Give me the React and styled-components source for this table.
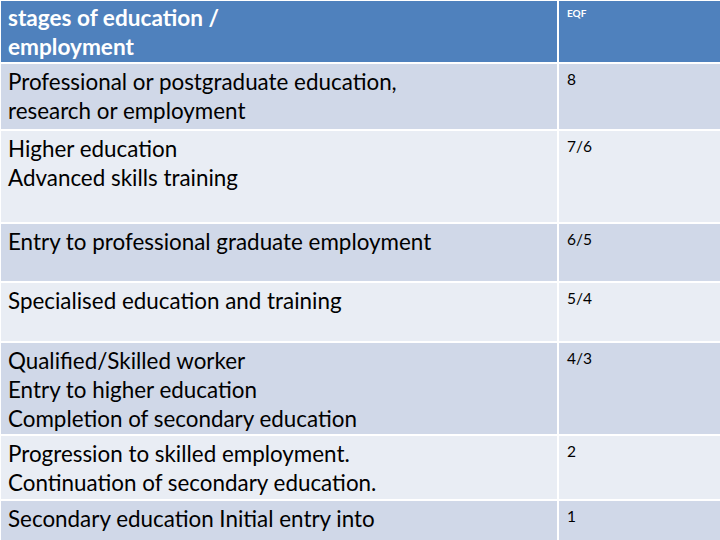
import React from 'react';
import styled, { createGlobalStyle } from 'styled-components';

const GlobalStyle = createGlobalStyle`
    html, body {
        margin: 0;
        padding: 0;
        background: #ffffff;
    }
    body {
        font-family: Lato, "Liberation Sans", sans-serif;
    }
`;

const Page = styled.div`
    width: 720px;
    height: 540px;
    overflow: hidden;
    padding: 1px 0 0 1px;
    box-sizing: border-box;
    background: #ffffff;
`;

const Table = styled.div`
    display: grid;
    grid-template-columns: 556px 1fr;
    column-gap: 2px;
    row-gap: 2px;
`;

const tones = {
    head: '#4f81bd',
    dark: '#d0d8e8',
    light: '#e9edf4',
};

const StageCell = styled.div`
    background: ${p => tones[p.$tone]};
    height: ${p => p.$h}px;
    padding: 3px 0 0 7px;
    box-sizing: border-box;
    font-size: 22.4px;
    line-height: 29px;
    color: #000;
    white-space: nowrap;
`;

const LevelCell = styled.div`
    background: ${p => tones[p.$tone]};
    height: ${p => p.$h}px;
    padding: 4px 0 0 8px;
    box-sizing: border-box;
    font-size: 15.5px;
    line-height: 22px;
    color: #000;
`;

const HeadStage = styled(StageCell)`
    color: #ffffff;
    font-weight: 700;
    font-size: 22.6px;
    padding-top: 2px;
`;

const HeadLevel = styled(LevelCell)`
    color: #ffffff;
    font-weight: 700;
    font-size: 10px;
    line-height: 14px;
    padding-top: 5px;
`;

const rows = [
    { h: 65, tone: 'dark', stage: ['Professional or postgraduate education,', 'research or employment'], eqf: '8' },
    { h: 91, tone: 'light', stage: ['Higher education', 'Advanced skills training'], eqf: '7/6' },
    { h: 57, tone: 'dark', stage: ['Entry to professional graduate employment'], eqf: '6/5' },
    { h: 58, tone: 'light', stage: ['Specialised education and training'], eqf: '5/4' },
    { h: 91, tone: 'dark', stage: ['Qualified/Skilled worker', 'Entry to higher education', 'Completion of secondary education'], eqf: '4/3' },
    { h: 63, tone: 'light', stage: ['Progression to skilled employment.', 'Continuation of secondary education.'], eqf: '2' },
    { h: 60, tone: 'dark', stage: ['Secondary education Initial entry into'], eqf: '1' },
];

export default function App() {
    return (
        <Page>
            <GlobalStyle />
            <Table>
                <HeadStage $tone="head" $h={61}>
                    stages of education /<br />employment
                </HeadStage>
                <HeadLevel $tone="head" $h={61}>EQF</HeadLevel>
                {rows.map((r, i) => (
                    <React.Fragment key={i}>
                        <StageCell $tone={r.tone} $h={r.h}>
                            {r.stage.map((line, j) => (
                                <div key={j}>{line}</div>
                            ))}
                        </StageCell>
                        <LevelCell $tone={r.tone} $h={r.h}>{r.eqf}</LevelCell>
                    </React.Fragment>
                ))}
            </Table>
        </Page>
    );
}
